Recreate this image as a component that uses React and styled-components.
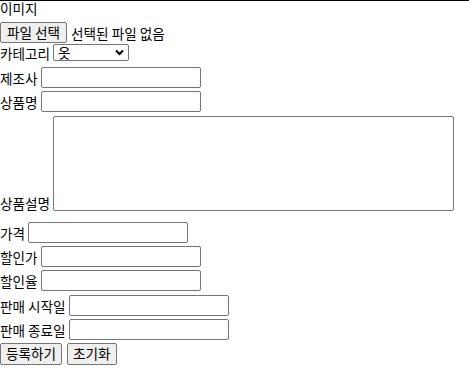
import React, { useState } from 'react';
import styled, { createGlobalStyle } from 'styled-components';

const GlobalStyle = createGlobalStyle`
  body {
    margin: 0;
    background: #fff;
    font-family: "Noto Sans CJK KR", "Noto Sans", sans-serif;
    color: #000;
  }
`

const Form = styled.form`
  display: flex;
  flex-direction: column;
  align-items: flex-start;
  border-top: 1px solid #000;
`

const Row = styled.div`
  display: flex;
  align-items: ${p => (p.$bottom ? 'flex-end' : 'center')};
  gap: ${p => p.$gap || 3}px;
  margin-top: ${p => p.$top || 0}px;
  height: ${p => p.$h || 21}px;
`

const Label = styled.label`
  font-size: 13.6px;
  line-height: 14px;
  white-space: pre;
  margin-bottom: ${p => (p.$bottom ? 1 : 0)}px;
`

const TopLabel = styled(Label)`
  align-self: flex-start;
  line-height: 14px;
`

const Input = styled.input`
  box-sizing: border-box;
  width: 160px;
  height: 21px;
  margin: 0;
  padding: 1px 2px;
  border: 1px solid #767676;
  border-radius: 2px;
  font: 13px "Noto Sans CJK KR", sans-serif;
  background: #fff;
`

const TextArea = styled.textarea`
  box-sizing: border-box;
  width: 401px;
  height: 95px;
  margin: 0;
  padding: 2px;
  border: 1px solid #767676;
  border-radius: 2px;
  resize: none;
  font: 13px "Noto Sans CJK KR", sans-serif;
`

const SelectBox = styled.div`
  position: relative;
  display: flex;
  width: 76px;
  height: 17px;
`

const Select = styled.select`
  appearance: none;
  box-sizing: border-box;
  width: 76px;
  height: 17px;
  margin: 0;
  padding: 0 0 0 4px;
  border: 1px solid #767676;
  border-radius: 2px;
  background: #fff;
  font: 13.6px/15px "Noto Sans CJK KR", sans-serif;
  color: #000;
`

const Chevron = styled.svg`
  position: absolute;
  right: 5px;
  top: 5px;
  pointer-events: none;
`

const Button = styled.button`
  box-sizing: border-box;
  height: ${p => p.$h || 22}px;
  margin: 0;
  padding: 0 5px;
  border: 1px solid #767676;
  border-radius: 2px;
  background: #efefef;
  font: 13.6px/1 "Noto Sans CJK KR", sans-serif;
  color: #000;
  white-space: pre;
`

const FileButton = styled(Button).attrs({ as: 'label' })`
  display: flex;
  align-items: center;
  padding: 0 6px;
`

const HiddenFile = styled.input`
  display: none;
`

const FileName = styled.span`
  font-size: 13.6px;
  white-space: pre;
`

const fields = [
  { name: 'maker', label: '제조사', top: 6 },
  { name: 'name', label: '상품명', top: 3 },
]

const priceFields = [
  { name: 'sale', label: '할인가', top: 3 },
  { name: 'rate', label: '할인율', top: 3 },
  { name: 'start', label: '판매 시작일', top: 4 },
  { name: 'end', label: '판매 종료일', top: 3 },
]

const App = () => {
  const [fileName, setFileName] = useState('');

  return (
    <>
      <GlobalStyle />
      <Form onSubmit={e => e.preventDefault()}>
        <Row $h={21}>
          <TopLabel>이미지</TopLabel>
        </Row>
        <Row $gap={4}>
          <FileButton $h={21} htmlFor="image">
            파일 선택
            <HiddenFile id="image" type="file" onChange={e => setFileName(e.target.files[0]?.name || '')} />
          </FileButton>
          <FileName>{fileName || '선택된 파일 없음'}</FileName>
        </Row>
        <Row $top={1} $h={17}>
          <Label htmlFor="category">카테고리</Label>
          <SelectBox>
            <Select id="category" defaultValue="옷">
              <option>옷</option>
              <option>가방</option>
              <option>신발</option>
            </Select>
            <Chevron width="9" height="7" viewBox="0 0 9 7">
              <path d="M1 1.5 L4.5 5 L8 1.5" fill="none" stroke="#000" strokeWidth="2" />
            </Chevron>
          </SelectBox>
        </Row>
        {fields.map(f => (
          <Row key={f.name} $top={f.top}>
            <Label htmlFor={f.name}>{f.label}</Label>
            <Input id={f.name} type="text" />
          </Row>
        ))}
        <Row $top={4} $h={95} $bottom>
          <Label $bottom htmlFor="desc">상품설명</Label>
          <TextArea id="desc" />
        </Row>
        <Row $top={11}>
          <Label htmlFor="price">가격</Label>
          <Input id="price" type="text" />
        </Row>
        {priceFields.map(f => (
          <Row key={f.name} $top={f.top}>
            <Label htmlFor={f.name}>{f.label}</Label>
            <Input id={f.name} type="text" />
          </Row>
        ))}
        <Row $top={3} $h={22} $gap={5}>
          <Button type="submit">등록하기</Button>
          <Button type="reset">초기화</Button>
        </Row>
      </Form>
    </>
  )
}

export default App
